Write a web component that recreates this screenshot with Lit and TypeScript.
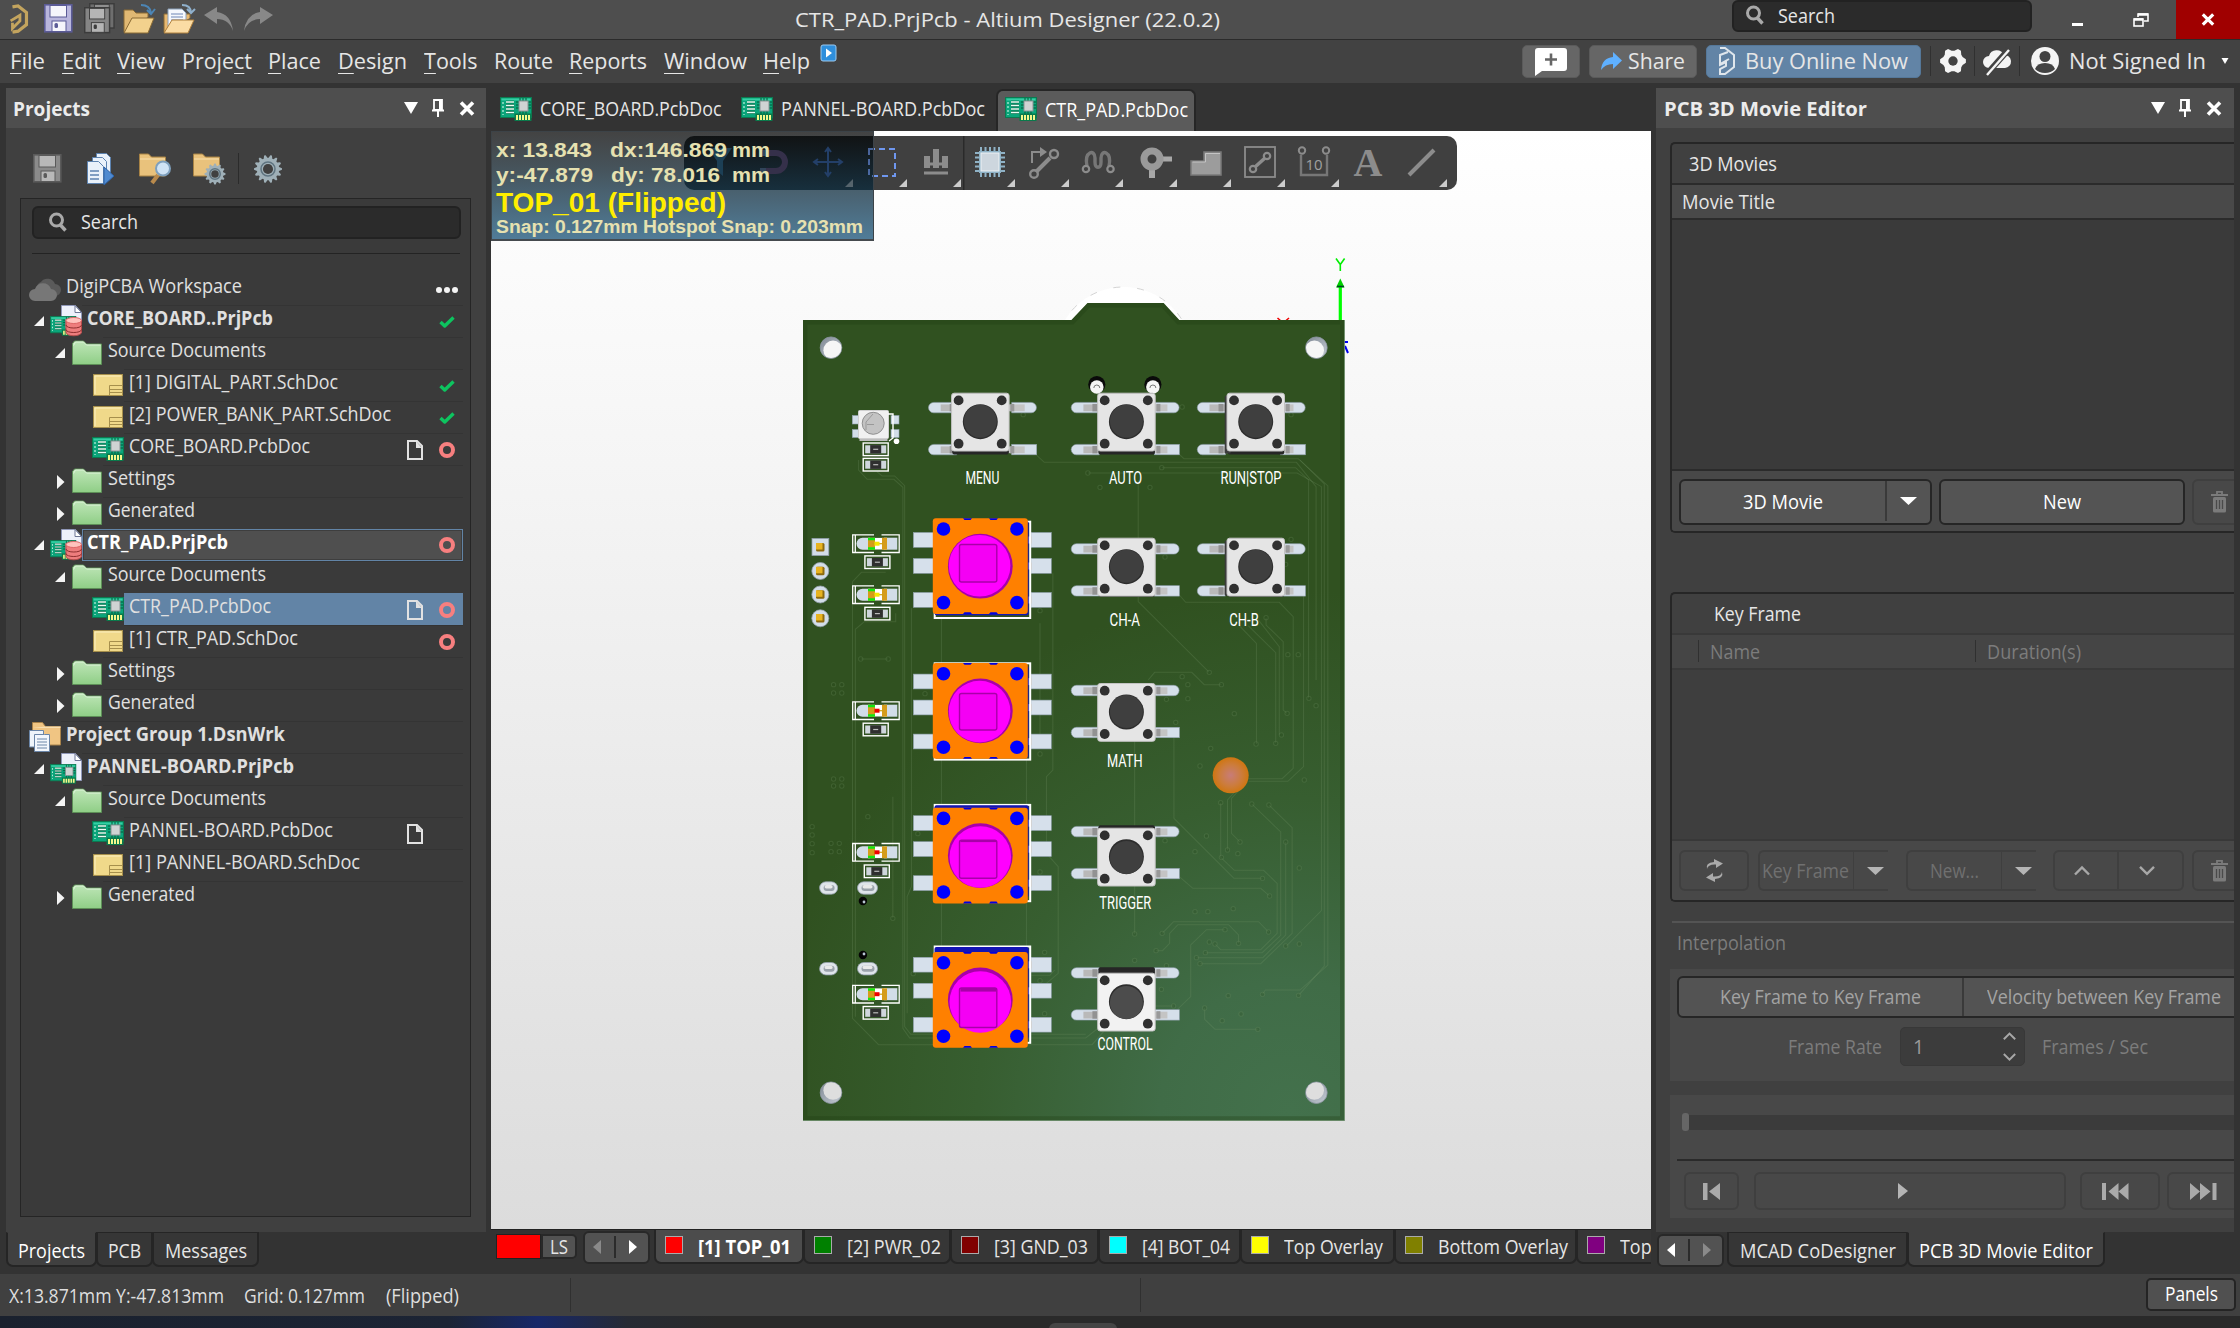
import { LitElement, html, svg, css, nothing } from "lit";
import { customElement, property } from "lit/decorators.js";

/** Single-line label squeezed or stretched horizontally to a given width. */
@customElement("fit-text")
class FitText extends LitElement {
  @property({ type: Number }) w = 0;
  static styles = css`
    :host { display: block; flex: none; white-space: nowrap; }
    .t { display: inline-block; transform-origin: 0 50%; white-space: pre; }
  `;
  updated() {
    const t = this.renderRoot.querySelector(".t") as HTMLElement;
    this.style.width = this.w + "px";
    t.style.transform = "none";
    const n = t.getBoundingClientRect().width;
    if (n) t.style.transform = `scaleX(${this.w / n})`;
  }
  render() { return html`<span class="t"><slot></slot></span>`; }
}

const ic = (w: number, h: number, body: unknown, vb = `0 0 ${w} ${h}`, cls = "") =>
  html`<svg class="ic ${cls}" width=${w} height=${h} viewBox=${vb}>${body}</svg>`;

/* ---------- icons ---------- */
const pcb = svg`
  <rect x=".5" y=".5" width="31" height="20" fill="#0aa57a" stroke="#0b7a50"/>
  <rect x="1.5" y="1.5" width="29" height="2" fill="#35d0a4"/>
  <path d="M3 5v13" stroke="#e4fff2" stroke-dasharray="2 2" fill="none"/>
  <path d="M6 5h8M6 8.5h8M6 12h8M6 15.5h8" stroke="#04583a" stroke-width="2.4"/>
  <path d="M6 5h8M6 8.5h8M6 12h8M6 15.5h8" stroke="#e8fff5" stroke-width="1.3"/>
  <path d="M20 1v16M23 1v16M26 1v16M16 5h15M16 8h15M16 11h15" stroke="#04583a"/>
  <rect x="19" y="4" width="9" height="10" fill="#cfd3d3" stroke="#8a9494"/>
  <rect x="14.5" y="16.5" width="17" height="7.500" fill="#0a7a4c"/>
  <path d="M17 18v5M20 18v5M23 18v5M26 18v5M29 18v5" stroke="#f4f88c" stroke-width="2"/>`;
const pcbIcon = () => ic(32, 24, pcb);
const prjIcon = (db: boolean) => ic(32, 32, svg`
  <path d="M11.500 .5h14l6 7v20h-20z" fill="#eef1fb" stroke="#8f97b8"/>
  <path d="M25 .5v7h6.500z" fill="#fff" stroke="#6d7594"/>
  <g transform="translate(0 11) scale(.82)">${pcb}</g>
  ${db ? svg`<path d="M16 15.500v11.500c0 5 15.500 5 15.500 0v-11.500z" fill="#ee7d7d" stroke="#b54b4b"/>
  <ellipse cx="23.750" cy="15.500" rx="7.750" ry="3" fill="#ffc2bd" stroke="#d66"/>
  <path d="M16 20c0 4 15.500 4 15.500 0M16 24.500c0 4 15.500 4 15.500 0" fill="none" stroke="#8f2f2f"/>` : nothing}`);
const folderIcon = () => ic(30, 26, svg`<defs><linearGradient id="fg" x2="0" y2="1"><stop stop-color="#bfe6b8"/><stop offset="1" stop-color="#8fce86"/></linearGradient></defs>
  <path d="M.5 24.500V3.500l2-2.500h9l3 3h15v20.500z" fill="url(#fg)" stroke="#5d8f57"/><path d="M1.500 5.500l2-3.500h8l3 3h14" fill="none" stroke="#def3da"/>`);
const schIcon = () => ic(30, 22, svg`<rect x=".5" y=".5" width="29" height="21" fill="#f0d98a" stroke="#a68f4c"/>
  <path d="M2 20V2h26" fill="none" stroke="#fbefc0"/><path d="M16.500 21V11.500H29M16.500 15.500H29M16.500 18.500H29" fill="none" stroke="#a68f4c"/>`);
const cloudIcon = () => ic(32, 24, svg`<path d="M8 12a6 6 0 0 1 4-7 8 8 0 0 1 14 2 6 6 0 0 1 0 12H10z" fill="#5a5a5a"/>
  <path d="M6 24a6 6 0 0 1 0-12 8.500 8.500 0 0 1 16 0 6 6 0 0 1 0 12z" fill="#777"/>`);
const groupIcon = () => ic(32, 30, svg`<path d="M3.500 23V.5h10l3 4h15v18.500z" fill="#f0c583" stroke="#a8824a"/><path d="M3.500 6h28V4.500h-15" fill="#f9dfb0"/>
  <path d="M.5 8.500h14v16.500H.5z" fill="#eef4fa" stroke="#6b86a8"/><path d="M5.500 12.500h10l5 0v17h-15z" fill="#f2f7fd" stroke="#6b86a8"/><path d="M8 17h10M8 20h10M8 23h10M8 26h10" stroke="#6b86a8"/>`);
const openArrow = () => ic(10, 10, svg`<path d="M10 0v10H0z" fill="#f4f4f4"/>`);
const shutArrow = () => ic(8, 14, svg`<path d="M0 0l7.500 7L0 14z" fill="#f4f4f4"/>`);
const check = () => ic(16, 12, svg`<path d="M1.500 6l4.200 4L14.500 1.500" fill="none" stroke="#0dc45f" stroke-width="3.400" stroke-linejoin="round"/>`);
const ring = () => ic(16, 16, svg`<circle cx="8" cy="8" r="6" fill="none" stroke="#f77f7f" stroke-width="4"/>`);
const docIcon = () => ic(16, 20, svg`<path d="M1 1h9l5 5v13H1z" fill="none" stroke="#e2e2e2" stroke-width="2"/><path d="M9 1v7h6z" fill="#e2e2e2"/>`);
const dots = () => ic(22, 6, svg`<g fill="#f4f4f4"><circle cx="3" cy="3" r="3"/><circle cx="11" cy="3" r="3"/><circle cx="19" cy="3" r="3"/></g>`);
const mag = (s = 20) => ic(s, s, svg`<circle cx="8.500" cy="8" r="6" fill="none" stroke="#a9a9a9" stroke-width="3"/><path d="M12 12.500l5.500 6" stroke="#a9a9a9" stroke-width="3.400"/>`, "0 0 20 20");
const tri = (w = 14, h = 12, c = "#fff") => ic(w, h, svg`<path d="M0 0h14l-7 12z" fill=${c}/>`, "0 0 14 12");
const caret = (c = "#fff") => ic(17, 8, svg`<path d="M0 0h17l-8.500 8z" fill=${c}/>`);
const pin = () => ic(12, 18, svg`<path d="M2 1h8v10H2z" fill="none" stroke="#fff" stroke-width="1.800"/><path d="M7 1h3v10H7z" fill="#fff"/><path d="M0 11.500h12M6 12v6" stroke="#fff" stroke-width="2"/>`);
const cross = (w = 16, h = 15) => ic(w, h, svg`<path d="M2 1.500l12 12M14 1.500l-12 12" stroke="#fff" stroke-width="3.600"/>`, "0 0 16 15");
const floppy = (a: string, b: string, c: string) => svg`<rect x=".8" y=".8" width="27" height="27" fill=${b} stroke=${a} stroke-width="1.600"/>
  <rect x="6" y="1.500" width="16.500" height="11.500" fill=${c} stroke=${a}/><rect x="8" y="17" width="14" height="10.500" fill=${c} stroke=${a}/><rect x="10.500" y="19" width="3.500" height="5" rx="1.500" fill=${a}/>`;
const gearPath = (r: number, n: number) => {
  let d = "";
  for (let i = 0; i < n * 4; i++) {
    const a = ((i - 0.5) / (n * 4)) * Math.PI * 2, q = i % 4 < 2 ? r : r * 0.8;
    d += `${i ? "L" : "M"}${(Math.cos(a) * q).toFixed(2)} ${(Math.sin(a) * q).toFixed(2)}`;
  }
  return d + "z";
};
const gear = (r: number, c = "#9fb0b8", n = 14, hole = "#404040") => svg`<path d=${gearPath(r, n)} fill=${c}/><circle r=${r * 0.36} fill=${hole}/>${n > 8 ? svg`<circle r=${r * 0.5} fill="none" stroke="#5f7480" stroke-width="1.500"/>` : nothing}`;
const trash = () => ic(17, 22, svg`<path d="M6 3V.8h5V3M0 4h17" fill="none" stroke="#7b7b7b" stroke-width="1.800"/><rect x="2" y="6" width="13" height="15.500" rx="1.500" fill="#7b7b7b"/><path d="M5.500 9v9M8.500 9v9M11.500 9v9" stroke="#4a4a4a" stroke-width="1.300"/>`);
const chev = (up: boolean, w = 16, h = 9) => ic(w, h, svg`<path d=${up ? "M1 8.500l7-7 7 7" : "M1 .8l7 7 7-7"} fill="none" stroke="#a8a8a8" stroke-width="2.400"/>`, "0 0 16 9");
const altium = (c: string) => svg`<path d="M3 2l6-1 9 7v13l-9 7-6 1" fill="none" stroke=${c} stroke-width="3.400"/><path d="M1 17l10-6v6l-8 8v-6" fill="none" stroke=${c} stroke-width="3"/>`;

/* ---------- tree ---------- */
type Row = { l: number; a?: "o" | "c"; i: () => unknown; t: string; w: number; b?: boolean; s?: (() => unknown)[]; c?: string };
const rows: Row[] = [
  { l: -1, i: cloudIcon, t: "DigiPCBA Workspace", w: 176, s: [dots], c: "first" },
  { l: 0, a: "o", i: () => prjIcon(true), t: "CORE_BOARD..PrjPcb", w: 186, b: true, s: [check] },
  { l: 1, a: "o", i: folderIcon, t: "Source Documents", w: 158 },
  { l: 2, i: schIcon, t: "[1] DIGITAL_PART.SchDoc", w: 209, s: [check] },
  { l: 2, i: schIcon, t: "[2] POWER_BANK_PART.SchDoc", w: 262, s: [check] },
  { l: 2, i: pcbIcon, t: "CORE_BOARD.PcbDoc", w: 181, s: [docIcon, ring] },
  { l: 1, a: "c", i: folderIcon, t: "Settings", w: 67 },
  { l: 1, a: "c", i: folderIcon, t: "Generated", w: 87 },
  { l: 0, a: "o", i: () => prjIcon(true), t: "CTR_PAD.PrjPcb", w: 141, b: true, s: [ring], c: "focus" },
  { l: 1, a: "o", i: folderIcon, t: "Source Documents", w: 158 },
  { l: 2, i: pcbIcon, t: "CTR_PAD.PcbDoc", w: 142, s: [docIcon, ring], c: "sel" },
  { l: 2, i: schIcon, t: "[1] CTR_PAD.SchDoc", w: 169, s: [ring] },
  { l: 1, a: "c", i: folderIcon, t: "Settings", w: 67 },
  { l: 1, a: "c", i: folderIcon, t: "Generated", w: 87 },
  { l: -1, i: groupIcon, t: "Project Group 1.DsnWrk", w: 219, b: true },
  { l: 0, a: "o", i: () => prjIcon(false), t: "PANNEL-BOARD.PrjPcb", w: 207, b: true },
  { l: 1, a: "o", i: folderIcon, t: "Source Documents", w: 158 },
  { l: 2, i: pcbIcon, t: "PANNEL-BOARD.PcbDoc", w: 204, s: [docIcon, () => nothing] },
  { l: 2, i: schIcon, t: "[1] PANNEL-BOARD.SchDoc", w: 231 },
  { l: 1, a: "c", i: folderIcon, t: "Generated", w: 87 },
];

/* ---------- board drawing ---------- */
const hole = (x: number, y: number, dy: number, c: string) => svg`<circle cx=${x} cy=${y} r="10.800" fill="url(#hg)" stroke="#8b95a1" stroke-width=".8"/>
  <clipPath id=${`h${x | 0}${y | 0}`}><circle cx=${x} cy=${y} r="10.400"/></clipPath><circle cx=${x + (x < 1000 ? 2 : -2)} cy=${y + dy} r="9.600" fill=${c} clip-path=${`url(#h${x | 0}${y | 0})`}/>`;

const tact = (cx: number, cy: number, pt: number, dx: number, shade: number, side = false) => {
  const lead = (y: number, sq: boolean) => svg`
    <path d=${`M${cx - 27} ${y}h-23a5.200 5.200 0 0 0 0 10.400h23z`} fill="#d5dfea" stroke="#8fa0ad" stroke-width=".6" transform=${`translate(${dx})`}/>
    ${sq ? svg`<rect x=${cx + 28 + dx} y=${y} width="25" height="10.400" fill="#d5dfea" stroke="#8fa0ad" stroke-width=".6"/>`
      : svg`<path d=${`M${cx + 28} ${y}h19.500a5.200 5.200 0 0 1 0 10.400h-19.500z`} fill="#d5dfea" stroke="#8fa0ad" stroke-width=".6" transform=${`translate(${dx})`}/>`}
    <path d=${`M${cx - 43 + dx} ${y + 2}H${cx - 28}v6.800H${cx - 43 + dx}z`} fill="#b9b9b9"/><path d=${`M${cx - 34 + dx} ${y + 1.500}h5v7.500h-5z`} fill="#929292"/>
    <path d=${`M${cx + 28} ${y + 2}H${cx + 41 + dx}v6.800H${cx + 28}z`} fill="#c4c4c4"/><path d=${`M${cx + 30} ${y + 1.500}h4v7.500h-4z`} fill="#999"/>`;
  const d = (x: number, y: number) => svg`<circle cx=${cx + x} cy=${cy + y} r="4.900" fill="#303030"/>`;
  return svg`${lead(cy + pt, false)}${lead(cy + pt + 42, true)}
    <rect x=${cx - 28} y=${cy - 28.500 + Math.min(shade, 0)} width="56.500" height=${57.500 + Math.abs(shade)} rx="2" fill="#262626"/>
    ${side ? svg`<rect x=${cx - 31} y=${cy - 26} width="6" height=${54 + Math.max(0, shade)} rx="1" fill="#3b3b3b"/>` : nothing}
    <rect x=${cx - 28.700} y=${cy - 28.500} width="57.500" height="57.800" rx="2.500" fill=${shade < -3 ? "#f2f2f2" : "#e5e5e5"} stroke="#c3c3c3" stroke-width="1"/>
    ${d(-21.700, -21.300)}${d(21.400, -21.300)}${d(-21.700, 22)}${d(21.400, 22)}
    <circle cx=${cx} cy=${cy} r="17.500" fill="#2d2d2d"/><circle cx=${cx} cy=${cy + (shade < 0 ? 0.8 : -0.5)} r="16.500" fill=${shade < -3 ? "#4c4c4c" : "#3f3f3f"}/>`;
};

const encoder = (top: number, i: number, sq: [number, number]) => {
  const f = 521.700 + 141.600 * i, pads = [532.500, 558.500, 592.500].map((p) => p + 141.600 * i);
  return svg`
    ${pads.map((p) => svg`<rect x="913.400" y=${p} width="21" height="14.800" fill="#d6e0eb" stroke="#8fa0ad" stroke-width=".6"/><rect x="1031" y=${p} width="20.300" height="14.800" fill="#d6e0eb" stroke="#8fa0ad" stroke-width=".6"/><rect x="1027" y=${p + 4} width="5" height="7" fill="#c9c9c9"/>`)}
    <rect x="934.700" y=${f} width="95.500" height="96.300" fill="none" stroke="#fff" stroke-width="2"/>
    <rect x="934.500" y=${i < 2 ? top + 3 : top - (i === 3 ? 5 : 2.500)} width="94.200" height=${i === 0 ? 94 : 92} rx="2" fill="#1414b4"/>
    <rect x="932.800" y=${top} width="95" height="95.700" rx="3" fill="#ff8000"/>
    ${[963, 989].map((x) => svg`<path d=${`M${x} ${top}h9l-1.500 1.800h-6zM${x} ${top + 95.700}h9l-1.500-1.800h-6z`} fill="#0000e0"/>`)}
    ${[[943.500, 10.700], [1016.900, 10.700], [943.500, 84.300], [1016.900, 84.300]].map(([x, y]) => svg`<circle cx=${x} cy=${top + y} r="6.800" fill="#0000ff"/>`)}
    <circle cx="980.300" cy=${top + 47.900} r="32.400" fill="#a800a8"/>
    <circle cx=${i < 2 ? 979.600 : 980.300} cy=${top + 47.900 + (i < 1 ? -0.5 : i * 0.7)} r="30.800" fill="#ff00ff"/>
    <rect x="959.500" y=${top + sq[0]} width="37.300" height=${sq[1]} rx="2" fill="#f400f4" stroke="#a800a8" stroke-width="1.400"/>
    ${i > 1 ? svg`<rect x="960.500" y=${top + sq[0]} width="35.500" height=${i * 1.700 - 1.500} fill="#a800a8"/>` : nothing}`;
};
const led = (y: number, c: string) => svg`
  <path d=${`M874 ${y - 8.800}H852.700v17.600H874M881.500 ${y - 8.800}h17.700v17.600h-17.700M855.300 ${y - 8.800}v17.600`} fill="none" stroke="#fff" stroke-width="1.300"/>
  <path d=${`M870 ${y - 6}h-7.500a6 6 0 0 0 0 12h7.500z`} fill="#d2dde8"/><rect x="884" y=${y - 6} width="13.300" height="12" fill="#d2dde8"/>
  <rect x="868" y=${y - 5.800} width="19" height="11.600" fill="#fff"/><path d=${`M868 ${y - 6}h7v12h-7zM882 ${y - 6}h5v12h-5z`} fill="#d59c1b"/><path d=${`M868 ${y - 6}h7v2.500h-7zM868 ${y + 3.500}h7v2.500h-7z`} fill="#12e612"/>
  <path d=${`M872 ${y}h11`} stroke="#d0a010" stroke-width="1.200"/><rect x="874.500" y=${y - 2} width="5" height="4" fill=${c}/>`;
const res = (x: number, y: number) => svg`<rect x=${x - 12.500} y=${y - 6.300} width="25" height="12.600" fill="none" stroke="#fff" stroke-width="1.400"/>
  <rect x=${x - 10.500} y=${y - 4} width="21" height="8" fill="#cfd6dc"/><rect x=${x - 5.500} y=${y - 4.200} width="11" height="8.400" fill="#2f2f2f"/><path d=${`M${x - 2.500} ${y}h5`} stroke="#bbb" stroke-width="1.200"/>`;
const slot = (x: number, y: number, w: number) => svg`<rect x=${x - w / 2} y=${y - 6.200} width=${w} height="12.400" rx="6.200" fill="#dfe4ea" stroke="#93a0ac" stroke-width=".8"/><rect x=${x - w / 2 + 4} y=${y - 3} width=${w - 7} height="6" rx="3" fill="#9aa2ab"/><rect x=${x - w / 2 + 5} y=${y - 3} width=${w - 10} height="3.400" rx="1.700" fill="#e9e9e9"/>`;

/* Traces use a 2.8 × 3 grid whose origin is the board's upper left region. */
const traces = [
  "660,523 684,547 1390,547 1445,620 1445,1200", "1062,523 1075,536 1395,536 1478,618 1478,2055 1400,2130 1303,2130 1295,2143", "1013,563 1388,563 1424,600 1424,1255",
  "806,579 1392,579 1460,620 1460,1892 1362,1998", "1400,540 1468,612 1468,2058 1396,2146", "947,600 947,965 1146,1177", "1062,945 1080,967 1342,967 1381,1010 1381,1465 1350,1496 1256,1496",
  "1410,945 1410,1460 1366,1504 1256,1504", "1230,1037 1278,1090 1278,1392", "1255,1037 1332,1118 1332,1390", "1280,1015 1342,1100 1342,1364", "1305,1013 1305,1035 1353,1085 1353,1290 1364,1300",
  "975,1200 993,1177 1097,1177 1132,1214 1180,1214", "1047,1372 1047,1615 1215,1795 1295,1795", "1062,1790 1100,1825 1290,1825 1315,1848", "937,1380 937,1962", "1178,1568 1178,1732 1216,1771 1298,1771 1336,1810 1336,1960 1290,2009 1178,2009 1162,1992",
  "1265,1572 1346,1656 1346,1966 1294,2018 1135,2018", "1313,1575 1378,1643 1378,1960 1290,2051 1120,2051", "1360,1686 1360,1965 1296,2033 1110,2033", "1197,1710 1197,1560 1222,1530", "1232,1686 1208,1660 1208,1555 1230,1530",
  "1014,1960 1046,1925 1284,1925 1312,1956", "997,2012 1015,2012 1035,1990 1035,1960 1058,1934 1200,1934 1228,1965 1228,1990", "1190,1949 1138,1949 1094,1995 1094,2150 1055,2190", "1133,2184 1133,2218 1162,2248 1282,2248",
  "164,540 164,570 188,598 263,598 288,622 288,2245 307,2274 800,2274 840,2240", "215,575 230,588 265,588 293,617 293,2240 310,2263 800,2263", "240,877 172,877 147,905 147,2215 220,2294 818,2294 850,2255", "268,1000 268,1025 180,1025 155,1048 155,2210", "170,1137 247,1137",
  "312,985 312,1820 300,1850 300,2200", "396,1010 396,2010", "634,1440 634,2010", "672,1030 672,1380", "708,880 708,1470 690,1490 690,1720 723,1760 723,2080 690,2110", "260,1550 260,1915", "985,2178 1046,2178", "648,2086 700,2086 713,2070",
];
const vias: [number, number][] = [[806, 579], [1013, 563], [840, 622], [980, 622], [625, 404], [1070, 381], [1375, 404], [1022, 831], [1375, 778], [1360, 853], [672, 992], [170, 1137], [247, 1137], [1146, 1177], [1305, 1013], [1366, 1124], [1395, 1124], [1070, 1190], [94, 1214], [117, 1214], [94, 1239], [117, 1239], [94, 1497], [117, 1497], [94, 1518], [117, 1518], [34, 1640], [34, 1665], [34, 1691], [34, 1718], [87, 1690], [110, 1690], [87, 1715], [110, 1715], [190, 1610], [260, 1915], [1180, 1214], [1086, 1214], [1086, 1256], [1026, 1258], [1216, 1301], [1052, 1327], [1150, 1405], [1120, 1458], [1277, 1392], [1332, 1390], [1348, 1365], [1364, 1300], [1412, 1500], [1425, 1255], [1445, 1277], [1178, 1568], [1265, 1572], [1313, 1575], [1138, 1668], [1106, 1715], [1232, 1686], [1360, 1686], [1197, 1710], [1226, 1721], [1180, 1732], [1022, 1682], [1398, 1764], [1295, 1795], [1315, 1848], [1106, 1895], [1142, 1895], [1213, 1886], [937, 1962], [1014, 1960], [1190, 1949], [1312, 1956], [1146, 1986], [1162, 1992], [1228, 1990], [1360, 1998], [1398, 1992], [997, 2012], [1135, 2018], [1110, 2033], [1120, 2051], [937, 2041], [1026, 2057], [1012, 2128], [1046, 2178], [1133, 2184], [1199, 2147], [1235, 2202], [1182, 2222], [1295, 2143], [1396, 2146], [1282, 2248], [672, 1422], [672, 1776], [685, 2017], [685, 2201], [672, 2102], [317, 2081], [330, 1661], [350, 1241]];

const label = (x: number, y: number, w: number, t: string) => svg`<text x=${x} y=${y} textLength=${w} lengthAdjust="spacingAndGlyphs" class="silk">${t}</text>`;

const board = () => html`<svg class="board" width="1160" height="1098" viewBox="491 131 1160 1098">
  <defs>
    <radialGradient id="bg" gradientUnits="userSpaceOnUse" cx="1290" cy="1110" r="520"><stop stop-color="#43714c"/><stop offset=".25" stop-color="#406c47"/><stop offset=".6" stop-color="#375e30"/><stop offset="1" stop-color="#305120"/></radialGradient>
    <linearGradient id="hg" x2="1" y2="1"><stop stop-color="#7f8893"/><stop offset="1" stop-color="#c5ccd5"/></linearGradient>
    <radialGradient id="ball"><stop stop-color="#c87c78"/><stop offset=".6" stop-color="#cc7c3c"/><stop offset="1" stop-color="#cf7610"/></radialGradient>
  </defs>
  <path d="M1277.500 318l3.500 3M1289 318l-3.500 3" stroke="#e00" stroke-width="1.600"/>
  <path d="M1340.300 286v34" stroke="#0f0" stroke-width="3.200"/><path d="M1336 287.500l4.300-9 4.300 9z" fill="#00d000"/><path d="M1337 286.500h7" stroke="#042" stroke-width="1.600"/>
  <path d="M1336 258.500l4.300 6v6.500M1344.600 258.500l-4.300 6" fill="none" stroke="#0e0" stroke-width="1.600"/>
  <path d="M1344 342h4M1345 346l3 7" stroke="#00e" stroke-width="2" fill="none"/>
  <circle cx="1123.500" cy="355.500" r="68.500" fill="#fff" stroke="#d4d4d4" stroke-width="1" stroke-dasharray="7 17"/>
  <path d="M803 320H1071.400L1087.500 303H1163.600L1179.300 320H1344.500V1120.700H803z" fill="url(#bg)"/>
  <path d="M805.200 322.200H1072.500L1088.600 305.200H1162.700L1178.300 322.200H1342.200V1118.500H805.200z" fill="none" stroke="#1d3c10" stroke-opacity=".3" stroke-width="4.400"/>
  <path d="M803 1120.500H1344.500V320" fill="none" stroke="#6d8f6c" stroke-width=".8"/>
  <g transform="matrix(.357143 0 0 .333333 800 280)" fill="none" stroke="#7fa070" stroke-opacity=".22" stroke-width="3">
    ${traces.map((t) => svg`<polyline points=${t}/>`)}
    ${vias.map(([x, y]) => svg`<ellipse cx=${x} cy=${y} rx="6" ry="6.500" fill="#24451a" fill-opacity=".2"/>`)}
  </g>
  ${hole(831, 347.700, 2.500, "#f6f6f6")}${hole(1316.400, 347.700, 2.500, "#f6f6f6")}${hole(831, 1092.700, -2.500, "#dedede")}${hole(1316.400, 1092.700, -2.500, "#dedede")}
  ${[1096.800, 1152.900].map((x) => svg`<circle cx=${x} cy="384.500" r="8.600" fill="#0a0a0a"/><circle cx=${x} cy="387" r="6.800" fill="#f6f6f6"/><path d=${`M${x - 3} 388a3 3 0 0 1 6 0`} fill="none" stroke="#777"/>`)}
  ${tact(980.300, 421.700, -19.300, 3.400, 3.800)}
  ${tact(1126.400, 421.700, -19.300, 0, 3.800)}
  ${tact(1255.700, 421.700, -19.300, -3.200, 3.800, true)}
  ${tact(1126.400, 566.700, -23, 0, 1)}
  ${tact(1255.700, 566.700, -23, -3.200, 1, true)}
  ${tact(1126.400, 712, -26.700, 0, 0)}
  ${tact(1126.400, 856.700, -30.300, 0, -3)}
  ${tact(1126.400, 1001.700, -34, 0, -6)}
  ${encoder(518.300, 0, [26.200, 37.500])}${encoder(663, 1, [30.500, 36.500])}${encoder(807.700, 2, [32.500, 38])}${encoder(952, 3, [36, 39.500])}
  ${led(543.700, "#f6e600")}${led(594.700, "#f6e600")}${led(710.700, "#e00")}${led(852.300, "#e00")}${led(994.200, "#e00")}
  ${res(875.700, 449.300)}${res(875.700, 464.700)}${res(877.400, 562.200)}${res(877.400, 613.600)}${res(875.700, 729.500)}${res(876.800, 871.300)}${res(875.700, 1012.800)}
  <g fill="#d2dde8" stroke="#8fa0ad" stroke-width=".6"><rect x="852.300" y="415.500" width="8" height="8.500"/><rect x="852.300" y="429.500" width="8" height="8"/><rect x="891" y="415.500" width="8" height="8.500"/><rect x="891" y="429.500" width="8" height="8"/></g>
  <rect x="859.500" y="437" width="28" height="4" fill="#bdbdbd"/><rect x="858.500" y="410.500" width="30" height="28" rx="1" fill="#f1f1f1" stroke="#cfcfcf"/><path d="M888 414h5v24l-4 3" fill="none" stroke="#fff" stroke-width="1.400"/><circle cx="873.200" cy="423.300" r="11" fill="#c3c3c3" stroke="#8f8f8f"/><path d="M866 430v-8l7-8M867 424.500h7" fill="none" stroke="#999"/><circle cx="896.500" cy="441.300" r="2.800" fill="#fff"/>
  <rect x="812" y="538.500" width="16.800" height="17" fill="#d2dde8" stroke="#93a0ac" stroke-width=".8"/>
  ${[571, 594.500, 618.300].map((y) => svg`<circle cx="820.300" cy=${y} r="8.500" fill="#d2dde8" stroke="#93a0ac" stroke-width=".8"/>`)}
  ${[547, 570.800, 594.300, 618].map((y) => svg`<rect x="816" y=${y - 4} width="8.500" height="8.500" rx="1.500" fill="#8d6a10"/><rect x="816" y=${y - 4} width="6.500" height="6.500" fill="#e8b320"/>`)}
  ${slot(828.600, 888, 18)}${slot(867.500, 888, 20)}${slot(828.600, 968.700, 18)}${slot(867.500, 968.700, 20)}
  ${[901, 955].map((y) => svg`<circle cx="862.900" cy=${y} r="4.200" fill="#050505"/><circle cx="864" cy=${y + (y < 920 ? 1 : -1)} r="1.400" fill="#b9c6d4"/>`)}
  <circle cx="1230.700" cy="775.300" r="18" fill="url(#ball)"/>
  ${label(965.400, 484, 34, "MENU")}${label(1109, 484, 33, "AUTO")}${label(1220.500, 484, 61, "RUN|STOP")}${label(1109.500, 626, 30.500, "CH-A")}${label(1229.300, 626, 29.500, "CH-B")}
  ${label(1107, 767.300, 35.500, "MATH")}${label(1099.300, 909, 52, "TRIGGER")}${label(1097.500, 1050.300, 55, "CONTROL")}
</svg>`;

/* ---------- floating toolbar ---------- */
const G = "#8c8c8c";
const tools: [unknown, boolean][] = [
  [svg`<path d="M4 2h24l-9 13v15l-6-5V15z" fill="#1c3f55"/>`, false],
  [svg`<path d="M6 7h12a9 9 0 0 1 0 18H6" fill="none" stroke="#35304a" stroke-width="6"/><path d="M2 4h6v6H2zM2 22h6v6H2z" fill="#31445a"/>`, false],
  [svg`<path d="M16 3v26M3 16h26M13 6l3-4 3 4M13 26l3 4 3-4M6 13l-4 3 4 3M26 13l4 3-4 3" fill="none" stroke="#233f68" stroke-width="2"/>`, true],
  [svg`<rect x="3" y="3" width="26" height="27" fill="none" stroke="#6f97ef" stroke-width="2" stroke-dasharray="6 4"/>`, true],
  [svg`<path d="M7 10v12M16 3v19M25 10v12" stroke=${G} stroke-width="6"/><path d="M4 18h24M4 27h24" stroke=${G} stroke-width="3"/>`, true],
  [svg`<path d="M7 1v30M11.500 1v30M16 1v30M20.500 1v30M25 1v30M1 7h30M1 11.500h30M1 16h30M1 20.500h30M1 25h30" stroke="#8fb2c6" stroke-width="2"/><rect x="5" y="5" width="22" height="22" fill="#8fb2c6"/><rect x="7" y="7" width="18" height="18" fill="#cdd6de" stroke="#edf2f5"/>`, true],
  [svg`<path d="M4 17V6h10" fill="none" stroke=${G} stroke-width="2"/><path d="M12 1l7 5-7 5z" fill=${G}/><path d="M8 26L22 12" stroke=${G} stroke-width="4"/><g fill="#404040" stroke=${G} stroke-width="2.400"><circle cx="6" cy="28" r="3.800"/><circle cx="26" cy="8" r="4"/></g>`, true],
  [svg`<path d="M5 20C2 5 13 3 13 12v4c0 7 6 7 6 0v-4c0-9 11-7 8 8" fill="none" stroke="#777" stroke-width="3.400"/><g fill="#404040" stroke=${G} stroke-width="2.200"><circle cx="4" cy="23" r="3.200"/><circle cx="28.500" cy="23" r="3.200"/></g>`, true],
  [svg`<path d="M16 22v10" stroke="#a8a8a8" stroke-width="6"/><path d="M24 13h12" stroke="#a8a8a8" stroke-width="5"/><circle cx="16" cy="13" r="8" fill="#404040" stroke="#9a9a9a" stroke-width="7"/>`, true],
  [svg`<path d="M1 29V15h13V6h17v23z" fill="#9c9c9c" stroke="#7a7a7a" stroke-width="1.500"/><path d="M2.500 16h13V7.500H30" fill="none" stroke="#c4c4c4"/>`, true],
  [svg`<rect x="1" y="1" width="30" height="30" fill="none" stroke=${G} stroke-width="1.800"/><path d="M11 21L21 12" stroke=${G} stroke-width="3.500"/><g fill="#404040" stroke=${G} stroke-width="2.200"><circle cx="9" cy="23" r="3.200"/><circle cx="23" cy="10" r="3.200"/></g>`, true],
  [svg`<path d="M3 9v20h26V9" fill="none" stroke="#777" stroke-width="2.400"/><g fill="#404040" stroke=${G} stroke-width="2"><circle cx="4" cy="4.500" r="3.200"/><circle cx="28" cy="4.500" r="3.200"/></g><text x="16" y="24" text-anchor="middle" class="ten" fill="#a0a0a0">10</text>`, true],
  [svg`<text x="16" y="30" text-anchor="middle" class="bigA" fill=${G}>A</text>`, false],
  [svg`<path d="M3 29L28 4" stroke=${G} stroke-width="4"/>`, true],
];

const layers: [string, string, number, number][] = [
  ["#ff0000", "[1] TOP_01", 93, 149], ["#008000", "[2] PWR_02", 94, 148], ["#800000", "[3] GND_03", 94, 148], ["#00ffff", "[4] BOT_04", 88, 143],
  ["#ffff00", "Top Overlay", 99, 154], ["#808000", "Bottom Overlay", 130, 183], ["#800080", "Top Paste", 82, 140],
];
const menus: [unknown, number][] = [
  [html`<u>F</u>ile`, 35], [html`<u>E</u>dit`, 39], [html`<u>V</u>iew`, 48], [html`Proje<u>c</u>t`, 70], [html`<u>P</u>lace`, 53], [html`<u>D</u>esign`, 69],
  [html`<u>T</u>ools`, 53.500], [html`Ro<u>u</u>te`, 59], [html`<u>R</u>eports`, 78], [html`<u>W</u>indow`, 83], [html`<u>H</u>elp`, 47],
];

@customElement("app-root")
class AppRoot extends LitElement {
  static styles = css`
    :host { display: block; width: 2240px; height: 1328px; overflow: hidden; background: #333; color: #e6e6e6; font: 19.500px/27px "Open Sans", "Noto Sans", sans-serif; }
    * { box-sizing: border-box; }
    .app { display: grid; grid-template-rows: 40px 43px 1191px 42px 12px; height: 1328px; }
    .ic { display: block; flex: none; overflow: visible; }
    .row, .title, .menu, .main, .status { display: flex; align-items: center; }
    .title { background: #4e4e4e; border-bottom: 1px solid #2b2b2b; padding-left: 9px; }
    .title .ic { margin-bottom: 2px; }
    .qa { display: grid; grid-template-columns: 35px 40px 39px 40px 41px 39px 40px; width: 274px; align-items: center; }
    .ttl { font-size: 20px; margin-left: 512px; }
    .tsearch { margin-left: 512px; width: 300px; height: 32px; align-self: flex-start; }
    .search { display: flex; align-items: center; background: #2b2b2b; border: 2px solid #222; border-radius: 6px; gap: 13px; padding: 0 0 2px 11px; }
    .tsearch .ic { margin: 0; }
    .win { display: flex; flex: 1; align-self: stretch; align-items: center; }
    .win .mi { margin: 10px 0 0 40px; } .win .re { margin: 0 0 0 50px; }
    .close { margin-left: auto; width: 64px; height: 39px; background: #a00000; display: flex; align-items: center; justify-content: center; }
    .close .ic { margin: 0; }
    .menu { background: #424242; padding-left: 10px; font-size: 21px; line-height: 38px; }
    .menus { display: flex; gap: 16.600px; align-items: center; height: 43px; padding-bottom: 2px; }
    .menus u { text-decoration-thickness: 1px; text-underline-offset: 4px; }
    .badge { margin: -18px 0 0 10px; }
    .acts { margin-left: auto; display: flex; align-items: center; height: 43px; padding-bottom: 2px; }
    .acts > .btn { margin-top: 2px; }
    .btn { display: flex; align-items: center; justify-content: center; height: 33px; border-radius: 5px; background: #666; border: 1px solid #5a5a5a; padding-bottom: 1px; }
    .cm { width: 58px; } .sh { width: 108px; margin-left: 9px; gap: 6px; } .buy { width: 215px; margin-left: 9px; gap: 9px; background: #6284a6; border-color: #55789a; padding-right: 3px; }
    .vs { width: 1px; height: 30px; background: #303030; }
    .main { align-items: stretch; padding-top: 5px; }
    .left { width: 491px; padding-left: 6px; display: flex; flex-direction: column; }
    .center { width: 1160px; display: flex; flex-direction: column; }
    .right { width: 589px; padding: 0 6px 0 5px; display: flex; flex-direction: column; }
    .phead { height: 40px; background: #4e4e4e; display: flex; align-items: center; font-weight: 700; padding-left: 8px; color: #ececec; }
    .phead fit-text { margin-top: 1px; margin-left: -1px; }
    .right .phead fit-text { margin-left: 0; }
    .phead .tri { margin-left: auto; margin-right: 14px; }
    .phead .ic:last-child { margin-left: 15px; }
    .left .phead { width: 480px; padding-right: 11px; } .right .phead { padding-right: 12px; }
    .pbody { background: #404040; height: 1104px; width: 480px; padding: 22px 15px 15px 14px; display: flex; flex-direction: column; }
    .ptools { display: grid; grid-template-columns: 54px 52px 54px 45px 16px 30px; padding-left: 13px; height: 37px; align-items: center; }
    .ptools .vs { height: 31px; background: #2b2b2b; }
    .tree { margin-top: 11px; border: 1.500px solid #252525; background: #3a3a3a; flex: 1; padding-top: 8px; }
    .tree .search { height: 33px; margin: -1px 9.500px 0 10.500px; padding-left: 14px; }
    .hr { height: 1px; background: #232323; margin: 14px 10px 19px 11px; }
    .trow { display: flex; height: 32px; padding-right: 7px; }
    .aslot { width: 17px; padding: 11px 0 0 1px; flex: none; } .aslot.s1 { padding: 10px 0 0 3px; }
    .islot { width: 32px; flex: none; display: flex; align-items: center; justify-content: center; }
    .lab { flex: 1; display: flex; padding-left: 4.500px; border-top: 1px solid #343434; line-height: 24.500px; color: #e0e0e0; }
    .first .lab { border-color: transparent; }
    .lab .gap { flex: 1; }
    .st { width: 32px; display: flex; align-items: center; justify-content: center; }
    .b { font-weight: 700; }
    .focus .lab { border: 1px solid #6284a6; background: #4f4f4f; color: #fff; padding-left: 3.500px; box-shadow: inset 0 0 0 1px #3e3e3e; }
    .focus .st { margin-right: -1px; }
    .sel .lab { background: #6284a6; border-color: #6284a6; }
    .ptabs { display: flex; height: 35px; align-items: flex-start; }
    .ptab { height: 35px; border: 2px solid #252525; border-top-width: 1px; border-radius: 0 0 7px 7px; background: #363636; display: flex; align-items: center; justify-content: center; margin-right: -1px; padding-top: 2px; }
    .ptab.on { background: #404040; border-top-color: #404040; color: #fff; }
    .nav { flex: none; display: flex; align-items: center; justify-content: space-between; background: #525252; border: 2px solid #282828; border-radius: 6px; height: 33px; width: 67px; padding: 0 11px 2px 8px; }
    .nav .vs { height: 22px; background: #2b2b2b; width: 2px; }
    .dtabs { display: flex; height: 43px; align-items: center; padding-left: 1px; }
    .dtab { display: flex; align-items: center; gap: 8px; height: 43px; padding: 0 11.500px 2px 8px; }
    .dtab.on { background: #5b5b5b; border: 2px solid #262626; border-bottom: 0; border-radius: 7px 7px 0 0; height: 42px; padding: 0 6px 3px 7px; margin-left: -1px; color: #fff; }
    .view { position: relative; height: 1098px; background: linear-gradient(#fff, #f8f8f8 22%, #dcdcdc); overflow: hidden; }
    .board { display: block; }
    .silk { font: 18px Roboto, sans-serif; fill: #fff; }
    .tb { position: absolute; left: 193px; top: 5px; width: 773px; height: 54px; border-radius: 10px; background: #404040; display: flex; padding-left: 9px; }
    .slot { width: 54px; height: 54px; display: grid; place-items: center; position: relative; padding-bottom: 2px; }
    .slot .mk { position: absolute; right: 2px; bottom: 3px; border: 4px solid transparent; border-right-color: #ccc; border-bottom-color: #ccc; }
    .chip { box-shadow: inset 1.500px 0 #2a2a2a; }
    .ten { font: 15px "Open Sans", sans-serif; } .bigA { font: bold 40px "Liberation Serif", serif; }
    .hud { position: absolute; left: 0; top: 0; width: 383px; height: 110px; border: 1px solid #3c4348; border-bottom: 2px solid #454a4e; background: linear-gradient(#434343, #46545c 35%, #507c98); color: #e6e1b0; font: bold 20.500px/25px "Liberation Sans", sans-serif; padding: 5px 0 0 4px; overflow: hidden; }
    .shade { position: absolute; left: 192px; top: 4px; width: 200px; height: 54px; border-radius: 10px 0 0 10px; background: linear-gradient(#111314, #172f3d); }
    .shade .slots { display: flex; padding-left: 9px; width: 400px; }
    .shade .mk { opacity: .35; }
    .shade .slot:last-child { opacity: .6; }
    .hl { display: flex; position: relative; height: 25px; }
    .hl .c2 { margin-left: 18px; } .hl .c3 { margin-left: 5px; }
    .yl { font-size: 27px; line-height: 29px; height: 27px; color: #ffee00; position: relative; margin-top: 2px; }
    .sn { font-size: 18px; line-height: 23px; position: relative; }
    .ltabs { display: flex; height: 35px; padding-left: 5px; overflow: hidden; border-top: 1px solid #222; }
    .red { flex: none; width: 45px; height: 25px; background: #f00; border: 1px solid #222; margin-top: 4px; }
    .ls { flex: none; width: 36px; height: 25px; background: #525252; border: 2px solid #282828; border-radius: 0 5px 5px 0; margin-top: 4px; display: flex; align-items: center; justify-content: center; }
    .ltabs .nav { margin: 1px 4px 0 6px; }
    .ltab { flex: none; height: 34px; border: 2px solid #252525; border-top: 0; border-radius: 0 0 7px 7px; background: #363636; display: flex; align-items: center; padding-left: 9px; gap: 15px; margin-right: -1px; white-space: nowrap; }
    .ltab.on { background: #4c4c4c; color: #fff; font-weight: 700; }
    .sw { width: 18px; height: 18px; border: 1px solid #aaa; flex: none; margin-bottom: 2px; }
    .status { background: #404040; padding-left: 9px; color: #dedede; position: relative; }
    .status .vs { height: 34px; }
    .panels { width: 90px; height: 33px; margin-left: auto; margin-right: 4px; background: #505050; border: 2px solid #242424; color: #fff; margin-bottom: 2px; }
    .task { background: linear-gradient(90deg, #1a212e, #1c2434 20%, #172768 24%, #262a34 28%, #2a2a2a 32%); padding: 7px 0 0 1049px; overflow: hidden; }
    .start { width: 68px; height: 20px; border-radius: 6px; background: #454545; }
    .rbody { background: #404040; height: 1104px; padding: 14px 0 0 14px; overflow: hidden; display: flex; flex-direction: column; }
    .box { border: 2px solid #262626; border-right: 0; border-radius: 5px 0 0 5px; flex: none; display: flex; flex-direction: column; overflow: hidden; }
    .bh { height: 39px; display: flex; align-items: center; }
    .bc { height: 37px; background: #494949; border: 1px solid #2b2b2b; border-width: 2px 0; display: flex; align-items: center; padding-bottom: 1px; }
    .bl { background: #3a3a3a; flex: 1; border-bottom: 2px solid #2b2b2b; }
    .bf { background: #484848; display: flex; width: 640px; padding: 8px 0 0 7px; }
    .gb { flex: none; background: #545454; border: 2px solid #262626; border-radius: 6px; height: 46px; display: flex; align-items: center; justify-content: center; color: #fff; padding-bottom: 2px; }
    .dis { background: #484848; border-color: #3f3f3f; height: 41px; color: #707070; padding-bottom: 0; }
    .dim { color: #7c7c7c; }
    .b2 .bc { background: #454545; border-color: #393939; } .b2 .bl { background: #3e3e3e; border-color: #383838; }
    .b2 .bf { padding-top: 9px; }
    .split { justify-content: flex-start; }
    .split .vs { background: #3a3a3a; width: 2px; height: 100%; }
    .dis .vs { background: #3f3f3f; height: 100%; }
    .sec { background: #484848; flex: none; overflow: hidden; }
    .m1 { margin-left: 7px; }
    .num { width: 125px; height: 39px; border-radius: 5px; background: #3c3c3c; border: 1px solid #383838; display: flex; align-items: center; justify-content: space-between; padding: 0 8px 0 12px; color: #9a9a9a; margin: 0 17px 0 18px; }
    .num .ar { display: grid; gap: 13px; }
    .seg { display: flex; height: 42px; width: 640px; margin-left: 7px; border: 2px solid #262626; border-radius: 6px; background: #535353; color: #a3a3a3; align-items: center; }
    .seg fit-text { margin-bottom: 2px; }
    .seg .vs { background: #3a3a3a; height: 38px; width: 2px; }
  `;

  head(t: string, w: number) {
    return html`<div class="phead"><fit-text .w=${w}>${t}</fit-text>${ic(14, 12, svg`<path d="M0 0h14l-7 12z" fill="#fff"/>`, "0 0 14 12", "tri")}${pin()}${cross()}</div>`;
  }
  slots(list: [unknown, boolean][]) {
    return list.map(([b, m], i) => html`<div class="slot ${list.length > 10 && i === 5 ? "chip" : ""}">${ic(32, 32, b)}${m ? html`<i class="mk"></i>` : nothing}</div>`);
  }
  nav(l: string, r: string) {
    return html`<div class="nav">${ic(8, 14, svg`<path d="M8 0L0 7l8 7z" fill=${l}/>`)}<i class="vs"></i>${ic(8, 14, svg`<path d="M0 0l8 7-8 7z" fill=${r}/>`)}</div>`;
  }
  render() {
    return html`<div class="app">
      <div class="title">
        <div class="qa">
          ${ic(20, 28, altium("#c3a45e"), "0 0 20 30")}
          ${ic(29, 29, floppy("#5b5b96", "#b9b6dd", "#f5f5fb"))}
          ${ic(32, 31, svg`<g transform="translate(5 0) scale(.9)">${floppy("#3c3c3c", "#6e6e6e", "#8f8f8f")}</g><g transform="translate(0 4) scale(.92)">${floppy("#3c3c3c", "#858585", "#b5b5b5")}</g>`)}
          ${ic(32, 30, svg`<path d="M1 28V6h9l3 3h12v4" fill="#e0b873" stroke="#8a6a34"/><path d="M1 29l8-15h22l-6 15z" fill="#f2d18d" stroke="#8a6a34"/><path d="M18 1q9 0 10 8M24 6l4 4 4-5" fill="none" stroke="#4c85b5" stroke-width="2"/>`)}
          ${ic(32, 30, svg`<path d="M1 28V10h26v4" fill="#e8b870" stroke="#8a6a34"/><path d="M5 24V5h14l4 4v14z" fill="#f5f8fd" stroke="#8aa0bb"/><path d="M8 10h12M8 13h12M8 16h12" stroke="#6f86b5"/><path d="M1 29l8-13h22l-6 13z" fill="#fbdca4" stroke="#b0803c"/><path d="M19 1q9 0 9 8M24 5l4 4 4-4" fill="none" stroke="#8fb0cc" stroke-width="2"/>`)}
          ${ic(30, 24, svg`<path d="M0 8L13 0v5q14 2 16 19Q25 12 13 12v5z" fill="#888"/>`)}
          ${ic(30, 24, svg`<path d="M30 8L17 0v5Q3 7 1 24 5 12 17 12v5z" fill="#888"/>`)}
        </div>
        <fit-text class="ttl" .w=${425}>CTR_PAD.PrjPcb - Altium Designer (22.0.2)</fit-text>
        <div class="search tsearch">${mag()}<fit-text .w=${57}>Search</fit-text></div>
        <div class="win">
          ${ic(11, 3, svg`<path d="M0 0h11v3H0z" fill="#fff"/>`, "0 0 11 3", "mi")}
          ${ic(16, 14, svg`<path d="M5 4V1h10v7h-4" fill="none" stroke="#fff" stroke-width="1.600"/><path d="M5 1.500h10" stroke="#fff" stroke-width="2.500"/><rect x="1" y="6" width="9" height="7" fill="none" stroke="#fff" stroke-width="1.600"/><path d="M1 6.500h9" stroke="#fff" stroke-width="2.500"/>`, "0 0 16 14", "re")}
          <div class="close">${cross(14, 13)}</div>
        </div>
      </div>
      <div class="menu">
        <div class="menus">${menus.map(([t, w]) => html`<fit-text .w=${w}>${t}</fit-text>`)}</div>
        ${ic(18, 18, svg`<rect x="1" y="1" width="15" height="16" rx="2" fill="#2f8fdc" stroke="#9cc9ee"/><path d="M6 4.500l6 4.500-6 4.500z" fill="#fff"/>`, "0 0 18 18", "badge")}
        <div class="acts">
          <div class="btn cm">${ic(32, 27, svg`<path d="M3 0h26q3 0 3 3v17q0 3-3 3H7l-7 5V3q0-3 3-3z" fill="#fff"/><path d="M16 5.500v12M10 11.500h12" stroke="#666" stroke-width="2.600"/>`)}</div>
          <div class="btn sh">${ic(21, 18, svg`<path d="M21 8.500L12 0v5Q1 6 0 18q4-6 12-6v5z" fill="#5fb0ff"/>`)}<fit-text .w=${57}>Share</fit-text></div>
          <div class="btn buy">${ic(19, 28, svg`<path d="M3 1h5l9 7v12l-9 7H3v-5l6-3v-4l-6 3V8l8-3M3 8v9l9-5" fill="none" stroke="#dfe6ec" stroke-width="2"/>`)}<fit-text .w=${163}>Buy Online Now</fit-text></div>
          <i class="vs" style="margin:0 9px"></i>${ic(26, 26, svg`<g transform="translate(13 13)">${gear(13, "#f4f4f4", 6, "#424242")}</g>`)}
          <i class="vs" style="margin:0 8px"></i>${ic(28, 26, svg`<path d="M6 20a6 6 0 0 1 0-12 8 8 0 0 1 15-1 6.500 6.500 0 0 1 1 13z" fill="#f4f4f4"/><path d="M3 27L26 1" stroke="#424242" stroke-width="6"/><path d="M4 27L26 2" stroke="#f4f4f4" stroke-width="2.400"/>`)}
          <i class="vs" style="margin:0 11px 0 8px"></i>${ic(28, 28, svg`<circle cx="14" cy="14" r="14" fill="#f4f4f4"/><circle cx="14" cy="9.500" r="5.500" fill="#424242"/><path d="M4 22q2-6 10-6t10 6q-4 4-10 4T4 22z" fill="#424242"/>`)}
          <fit-text style="margin:0 14px 0 10px" .w=${137}>Not Signed In</fit-text>${tri(10, 6)}<i style="width:10px"></i>
        </div>
      </div>
      <div class="main">
        <div class="left">
          ${this.head("Projects", 77)}
          <div class="pbody">
            <div class="ptools">
              ${ic(29, 29, floppy("#5a5a5a", "#8b8b8b", "#b8b8b8"))}
              ${ic(29, 32, svg`<g fill="#e9f1fa" stroke="#5d83b0"><path d="M9.500 .5h10l4 4v18h-14z"/><path d="M5.500 4.500h10l4 4v18h-14z"/><path d="M.5 8.500h11l5 5v17h-16z"/></g><path d="M3 18h9M3 22h9M3 26h9" stroke="#5d83b0" stroke-width="1.500"/><path d="M17 14l10 9-10 9z" fill="#4f8ad0" stroke="#2d62a8"/>`)}
              ${ic(32, 32, svg`<path d="M.5 23V1h9l3 3h14v19z" fill="#e9c27c" stroke="#a88345"/><path d="M1 6h25" stroke="#f7dfae"/><path d="M19 22l-6 8" stroke="#b98a4c" stroke-width="4"/><circle cx="24" cy="15.500" r="7" fill="#cfe3f5" stroke="#7fa0bd" stroke-width="2"/>`)}
              ${ic(32, 32, svg`<path d="M.5 23V1h9l3 3h14v19z" fill="#e9c27c" stroke="#a88345"/><path d="M1 6h25" stroke="#f7dfae"/><g transform="translate(22 21)">${gear(10.500, "#9fb0b8", 12)}</g>`)}
              <i class="vs"></i>
              ${ic(28, 28, svg`<g transform="translate(14 14)">${gear(14)}</g>`)}
            </div>
            <div class="tree">
              <div class="search">${mag()}<fit-text .w=${57}>Search</fit-text></div>
              <div class="hr"></div>
              ${rows.map((r) => html`<div class="trow ${r.c ?? ""}" style="padding-left:${r.l < 0 ? 8 : 12 + 21 * r.l}px">
                ${r.l < 0 ? nothing : html`<div class="aslot ${r.a === "o" ? "" : "s1"}">${r.a === "o" ? openArrow() : r.a === "c" ? shutArrow() : nothing}</div>`}
                <div class="islot">${r.i()}</div>
                <div class="lab ${r.b ? "b" : ""}"><fit-text .w=${r.w}>${r.t}</fit-text><span class="gap"></span>${(r.s ?? []).map((s) => html`<span class="st">${s()}</span>`)}</div>
              </div>`)}
            </div>
          </div>
          <div class="ptabs">
            <div class="ptab on" style="width:91px"><fit-text .w=${67}>Projects</fit-text></div>
            <div class="ptab" style="width:57px"><fit-text .w=${33}>PCB</fit-text></div>
            <div class="ptab" style="width:107px"><fit-text .w=${82}>Messages</fit-text></div>
          </div>
        </div>
        <div class="center">
          <div class="dtabs">
            <div class="dtab">${pcbIcon()}<fit-text .w=${181.5}>CORE_BOARD.PcbDoc</fit-text></div>
            <div class="dtab">${pcbIcon()}<fit-text .w=${204}>PANNEL-BOARD.PcbDoc</fit-text></div>
            <div class="dtab on">${pcbIcon()}<fit-text .w=${143}>CTR_PAD.PcbDoc</fit-text></div>
          </div>
          <div class="view">
            ${board()}
            <div class="tb">${this.slots(tools)}</div>
            <div class="hud">
              <div class="shade"><div class="slots">${this.slots(tools.slice(0, 4))}</div></div>
              <div class="hl"><fit-text .w=${96}>x: 13.843</fit-text><fit-text class="c2" .w=${117}>dx:146.869</fit-text><fit-text class="c3" .w=${38}>mm</fit-text></div>
              <div class="hl"><fit-text .w=${97}>y:-47.879</fit-text><fit-text class="c2" .w=${109}>dy: 78.016</fit-text><fit-text style="margin-left:12px" .w=${38}>mm</fit-text></div>
              <div class="yl"><fit-text .w=${230}>TOP_01 (Flipped)</fit-text></div>
              <div class="sn"><fit-text .w=${367}>Snap: 0.127mm Hotspot Snap: 0.203mm</fit-text></div>
            </div>
          </div>
          <div class="ltabs">
            <div class="red"></div><div class="ls"><fit-text .w=${18}>LS</fit-text></div>
            ${this.nav("#8a8a8a", "#fff")}
            ${layers.map(([c, t, w, tw], i) => html`<div class="ltab ${i ? "" : "on"}" style="width:${tw + 0.500}px"><i class="sw" style="background:${c}"></i><fit-text .w=${w}>${t}</fit-text></div>`)}
          </div>
        </div>
        <div class="right">
          ${this.head("PCB 3D Movie Editor", 203)}
          <div class="rbody">
            <div class="box" style="height:391px">
              <div class="bh" style="padding-left:17px"><fit-text .w=${88}>3D Movies</fit-text></div>
              <div class="bc" style="padding-left:10px"><fit-text .w=${93}>Movie Title</fit-text></div>
              <div class="bl"></div>
              <div class="bf" style="height:60px">
                <div class="gb split" style="width:253px"><fit-text style="margin:0 62px 0 62px" .w=${80}>3D Movie</fit-text><i class="vs"></i><i style="width:13px"></i>${caret()}</div>
                <div class="gb m1" style="width:246px"><fit-text .w=${38}>New</fit-text></div>
                <div class="gb dis m1" style="width:60px;height:46px;justify-content:flex-start;padding-left:17px">${trash()}</div>
              </div>
            </div>
            <div class="box b2" style="height:310px;margin-top:59px">
              <div class="bh" style="padding-left:42px"><fit-text .w=${87}>Key Frame</fit-text></div>
              <div class="bc dim"><i class="vs" style="height:22px;margin:0 11px 0 26px"></i><fit-text .w=${50}>Name</fit-text><i class="vs" style="height:22px;margin:0 11px 0 215px"></i><fit-text .w=${94}>Duration(s)</fit-text></div>
              <div class="bl"></div>
              <div class="bf" style="height:59px">
                <div class="gb dis" style="width:70px">${ic(19, 21, svg`<path d="M2 9q1-5 9-4.500V8l7-4.500L9-1v3Q0 3 2 9zM17 12q-1 5-9 4.500V13l-7 4.500L10 22v-3q9-1 7-7z" fill="#aaa"/>`)}</div>
                <div class="gb dis" style="width:130px;margin-left:9px;border-right:0;border-radius:6px 0 0 6px;justify-content:flex-start"><fit-text style="margin-left:2px" .w=${87}>Key Frame</fit-text><i class="vs" style="margin:0 13px 0 4px"></i>${caret("#b5b5b5")}</div>
                <div class="gb dis" style="width:130px;margin-left:18px;border-right:0;border-radius:6px 0 0 6px;justify-content:flex-start"><fit-text style="margin-left:22px" .w=${49}>New...</fit-text><i class="vs" style="margin:0 13px 0 22px"></i>${caret("#b5b5b5")}</div>
                <div class="gb dis" style="width:131px;margin-left:17px;justify-content:flex-start;padding-left:19px">${chev(true)}<i class="vs" style="width:2px;margin:0 20px 0 27px"></i>${chev(false)}</div>
                <div class="gb dis" style="width:60px;margin-left:8px;justify-content:flex-start;padding-left:17px">${trash()}</div>
              </div>
            </div>
            <div style="height:2px;background:#545454;margin:19px 0 0 2px;flex:none"></div>
            <fit-text class="dim" style="margin:6px 0 13px 7px" .w=${109}>Interpolation</fit-text>
            <div class="sec" style="height:112px;padding-top:7px">
              <div class="seg"><fit-text style="margin-left:41px;margin-right:41px" .w=${201}>Key Frame to Key Frame</fit-text><i class="vs"></i><fit-text style="margin-left:23px" .w=${234}>Velocity between Key Frame</fit-text></div>
              <div class="row dim" style="padding:9px 0 0 118px"><fit-text .w=${94}>Frame Rate</fit-text><div class="num"><span>1</span><span class="ar">${chev(true, 13, 8)}${chev(false, 13, 8)}</span></div><fit-text .w=${106}>Frames / Sec</fit-text></div>
            </div>
            <div class="sec" style="height:123px;margin-top:14px;padding-top:18px">
              <div class="row" style="padding-left:12px"><i style="width:7px;height:18px;border-radius:3px;background:#666"></i><i style="flex:1;height:15px;background:#3b3b3b"></i></div>
              <div style="height:2px;background:#2a2a2a;margin:28px 0 11px 7px"></div>
              <div class="row" style="width:640px;padding-left:14px">
                <div class="gb dis" style="width:55px;height:38px">${ic(17, 17, svg`<path d="M0 0h4.500v17H0zM17 0v17L6 8.500z" fill="#aaa"/>`)}</div>
                <div class="gb dis" style="width:312px;height:38px;margin-left:15px;padding-right:14px">${ic(10, 16, svg`<path d="M0 0l10 8-10 8z" fill="#b5b5b5"/>`)}</div>
                <div class="gb dis" style="width:80px;height:38px;margin-left:14px;padding-right:9px">${ic(27, 17, svg`<path d="M0 0h4v17H0zM16.500 0v17L6.500 8.500zM26.500 0v17L16.500 8.500z" fill="#aaa"/>`)}</div>
                <div class="gb dis" style="width:100px;height:38px;margin-left:7px;justify-content:flex-start;padding-left:21px">${ic(27, 17, svg`<path d="M22.500 0h4v17h-4zM0 0v17L10 8.500zM10 0v17L20.500 8.500z" fill="#aaa"/>`)}</div>
              </div>
            </div>
          </div>
          <div class="ptabs">
            <div style="padding:2px 3px 0 1px">${this.nav("#fff", "#8a8a8a")}</div>
            <div class="ptab" style="width:181px"><fit-text .w=${156}>MCAD CoDesigner</fit-text></div>
            <div class="ptab on" style="width:198px"><fit-text .w=${174}>PCB 3D Movie Editor</fit-text></div>
          </div>
        </div>
      </div>
      <div class="status">
        <fit-text .w=${215}>X:13.871mm Y:-47.813mm</fit-text><fit-text style="margin-left:20px" .w=${121}>Grid: 0.127mm</fit-text><fit-text style="margin-left:21px" .w=${73}>(Flipped)</fit-text>
        <i class="vs" style="margin-left:111px"></i><i class="vs" style="margin-left:569px"></i>
        <div class="btn panels"><fit-text .w=${53}>Panels</fit-text></div>
      </div>
      <div class="task"><div class="start"></div></div>
    </div>`;
  }
}
